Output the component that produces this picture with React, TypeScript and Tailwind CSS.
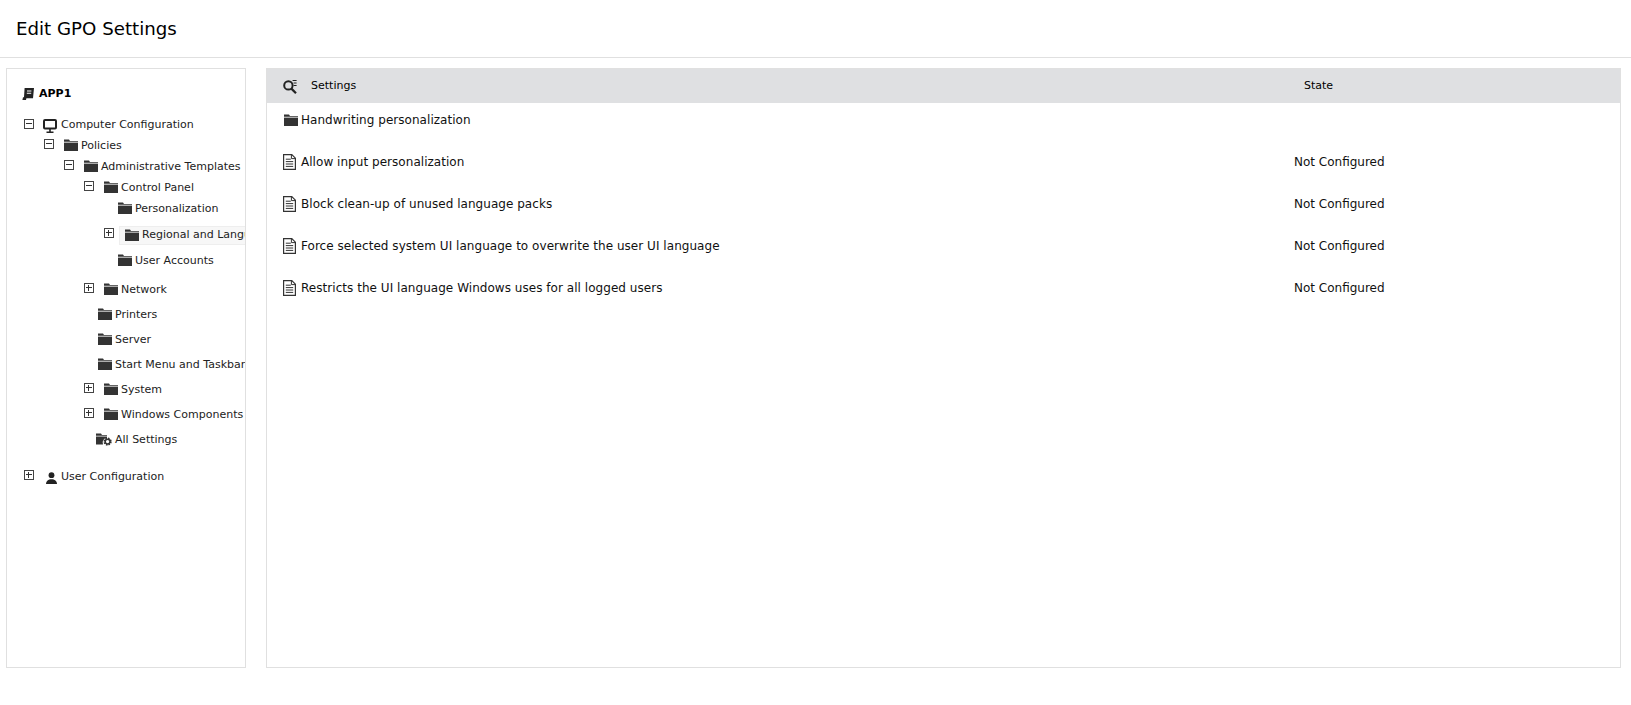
function FolderIcon() {
  return (
    <svg width="14" height="12" viewBox="0 0 14 12" className="mb-[3px] shrink-0 text-[#333]" fill="currentColor">
      <path d="M0 0.5h5l1 1.5h8v0.8H0z" />
      <rect x="0" y="3.6" width="14" height="8.4" />
    </svg>
  )
}

function FolderGearIcon() {
  return (
    <svg width="16" height="13" viewBox="0 0 16 13" className="mb-[2px] shrink-0 text-[#333]" fill="currentColor">
      <path d="M0 0.5h5l1 1.5h5v0.8H0z" />
      <path d="M0 3.6h11v1.4a4.6 4.6 0 0 0-4 6.6H0z" />
      <circle cx="11.6" cy="8.6" r="3.3" fill="none" stroke="currentColor" strokeWidth="1.6" strokeDasharray="1.5 1.1" />
      <circle cx="11.6" cy="8.6" r="2.4" fill="none" stroke="currentColor" strokeWidth="1.5" />
    </svg>
  )
}

function DocIcon() {
  return (
    <svg width="13" height="16" viewBox="0 0 13 16" className="shrink-0 text-[#333]" fill="none" stroke="currentColor" strokeWidth="1.2">
      <path d="M0.6 0.6h8.2l3.6 3.6v11.2H0.6z" />
      <path d="M8.4 0.8v3.8h3.8" strokeWidth="1" />
      <path d="M2.8 5.2h5M2.8 7.6h7.4M2.8 10h7.4M2.8 12.4h7.4" strokeWidth="1" />
    </svg>
  )
}

function ServerDocIcon() {
  return (
    <svg width="12" height="12" viewBox="0 0 12 12" className="-ml-[1px] shrink-0 text-[#222]" fill="currentColor">
      <path fillRule="evenodd" d="M2.6 0h9.4l-1 10.2H4.4L4 12H0.4L1 9.2h1zM5 2.4h4.4v1H5zM4.8 4.8h4.4v1H4.8z" />
    </svg>
  )
}

function MonitorIcon() {
  return (
    <svg width="14" height="14" viewBox="0 0 14 14" className="shrink-0 text-[#222]" fill="none" stroke="currentColor">
      <rect x="1" y="1" width="12" height="8.6" rx="1" strokeWidth="2" />
      <path d="M7 10v3M3.5 13.2h7" strokeWidth="1.6" />
    </svg>
  )
}

function UserIcon() {
  return (
    <svg width="11" height="12" viewBox="0 0 11 12" className="shrink-0 text-[#222]" fill="currentColor">
      <circle cx="5.5" cy="3.2" r="2.9" />
      <path d="M0 12c0-3 2.4-4.8 5.5-4.8S11 9 11 12z" />
    </svg>
  )
}

function SearchListIcon() {
  return (
    <svg width="14" height="15" viewBox="0 0 14 15" className="shrink-0 text-[#222]" fill="none" stroke="currentColor">
      <circle cx="5.4" cy="6.4" r="4.2" strokeWidth="2" />
      <path d="M8.4 9.6l4.6 4.6" strokeWidth="2.2" />
      <path d="M9.6 1.5h4M10.6 4h3M10.6 6.5h3" strokeWidth="1" />
    </svg>
  )
}

function Expander({ open, top }: { open: boolean; top?: boolean }) {
  return (
    <span className={`relative h-[10px] w-[10px] shrink-0 border border-[#444] bg-white ${top ? 'mb-[3px]' : 'mb-[5px]'}`}>
      <span className="absolute left-[1px] top-[3px] h-[1px] w-[6px] bg-[#333]" />
      {!open && <span className="absolute left-[3px] top-[1px] h-[6px] w-[1px] bg-[#333]" />}
    </span>
  )
}

function Settings() {
  const rows = [
    { name: 'Handwriting personalization', state: '', folder: true },
    { name: 'Allow input personalization', state: 'Not Configured' },
    { name: 'Block clean-up of unused language packs', state: 'Not Configured' },
    { name: 'Force selected system UI language to overwrite the user UI language', state: 'Not Configured' },
    { name: 'Restricts the UI language Windows uses for all logged users', state: 'Not Configured' },
  ]
  return (
    <main className="flex-1 border border-[#e0e0e0]">
      <div className="flex h-[34px] items-center bg-[#dfe0e2] pl-[16px] text-[11px]">
        <SearchListIcon />
        <span className="ml-[14px] w-[993px]">Settings</span>
        <span>State</span>
      </div>
      {rows.map((r) => (
        <div key={r.name} className="flex h-[42px] items-start pl-[16px] pt-[8px] text-[12px] text-[#111]">
          <span className="flex w-[1011px] items-center gap-[4px] tracking-[0.04px]">
            <span className="flex w-[14px]">
              {r.folder ? <span className="ml-[1px] mt-[2px] flex"><FolderIcon /></span> : <DocIcon />}
            </span>
            {r.name}
          </span>
          <span>{r.state}</span>
        </div>
      ))}
    </main>
  )
}

function Tree() {
  return (
    <aside className="w-[240px] shrink-0 overflow-hidden border border-[#e0e0e0] pl-[16px] pt-[15px] text-[11px] text-[#222]">
      <div className="flex h-[20px] items-center gap-[5px] font-bold text-black">
        <ServerDocIcon />
        APP1
      </div>
      <div className="mt-[11px] whitespace-nowrap">
        <div className="flex h-[21px] items-center pl-[1px]">
          <Expander open top />
          <span className="ml-[9px] mr-[4px] flex"><MonitorIcon /></span>
          Computer Configuration
        </div>
        <div className="flex h-[21px] items-center pl-[21px]">
          <Expander open />
          <span className="ml-[10px] mr-[3px] flex"><FolderIcon /></span>
          Policies
        </div>
        <div className="flex h-[21px] items-center pl-[41px]">
          <Expander open />
          <span className="ml-[10px] mr-[3px] flex"><FolderIcon /></span>
          Administrative Templates
        </div>
        <div className="flex h-[21px] items-center pl-[61px]">
          <Expander open />
          <span className="ml-[10px] mr-[3px] flex"><FolderIcon /></span>
          Control Panel
        </div>
        <div className="flex h-[21px] items-center gap-[3px] pl-[95px]">
          <FolderIcon />
          Personalization
        </div>
        <div className="flex h-[31px] items-center pl-[81px]">
          <Expander open={false} />
          <span className="ml-[5px] flex h-[19px] flex-1 items-center gap-[3px] border border-[#eeeeee] bg-[#f7f7f7] pl-[5px]">
            <span className="mt-[2px] flex"><FolderIcon /></span>
            Regional and Language Options
          </span>
        </div>
        <div className="flex h-[21px] items-center gap-[3px] pl-[95px]">
          <FolderIcon />
          User Accounts
        </div>
        <div className="mt-[6px] flex h-[25px] items-center pl-[61px]">
          <Expander open={false} />
          <span className="ml-[10px] mr-[3px] flex"><FolderIcon /></span>
          Network
        </div>
        <div className="flex h-[25px] items-center gap-[3px] pl-[75px]">
          <FolderIcon />
          Printers
        </div>
        <div className="flex h-[25px] items-center gap-[3px] pl-[75px]">
          <FolderIcon />
          Server
        </div>
        <div className="flex h-[25px] items-center gap-[3px] pl-[75px]">
          <FolderIcon />
          Start Menu and Taskbar
        </div>
        <div className="flex h-[25px] items-center pl-[61px]">
          <Expander open={false} />
          <span className="ml-[10px] mr-[3px] flex"><FolderIcon /></span>
          System
        </div>
        <div className="flex h-[25px] items-center pl-[61px]">
          <Expander open={false} />
          <span className="ml-[10px] mr-[3px] flex"><FolderIcon /></span>
          Windows Components
        </div>
        <div className="flex h-[25px] items-center gap-[3px] pl-[73px]">
          <FolderGearIcon />
          All Settings
        </div>
        <div className="mt-[12px] flex h-[25px] items-center pl-[1px]">
          <Expander open={false} />
          <span className="ml-[12px] mr-[4px] flex"><UserIcon /></span>
          User Configuration
        </div>
      </div>
    </aside>
  )
}

export default function App() {
  return (
    <div className="flex h-[705px] flex-col bg-white font-['DejaVu_Sans','Liberation_Sans',sans-serif]">
      <header className="flex h-[58px] shrink-0 items-center border-b border-[#e0e0e0] pl-[16px] text-[18.2px] text-black">
        Edit GPO Settings
      </header>
      <div className="flex h-[610px] gap-[20px] pl-[6px] pr-[10px] pt-[10px]">
        <Tree />
        <Settings />
      </div>
    </div>
  )
}
